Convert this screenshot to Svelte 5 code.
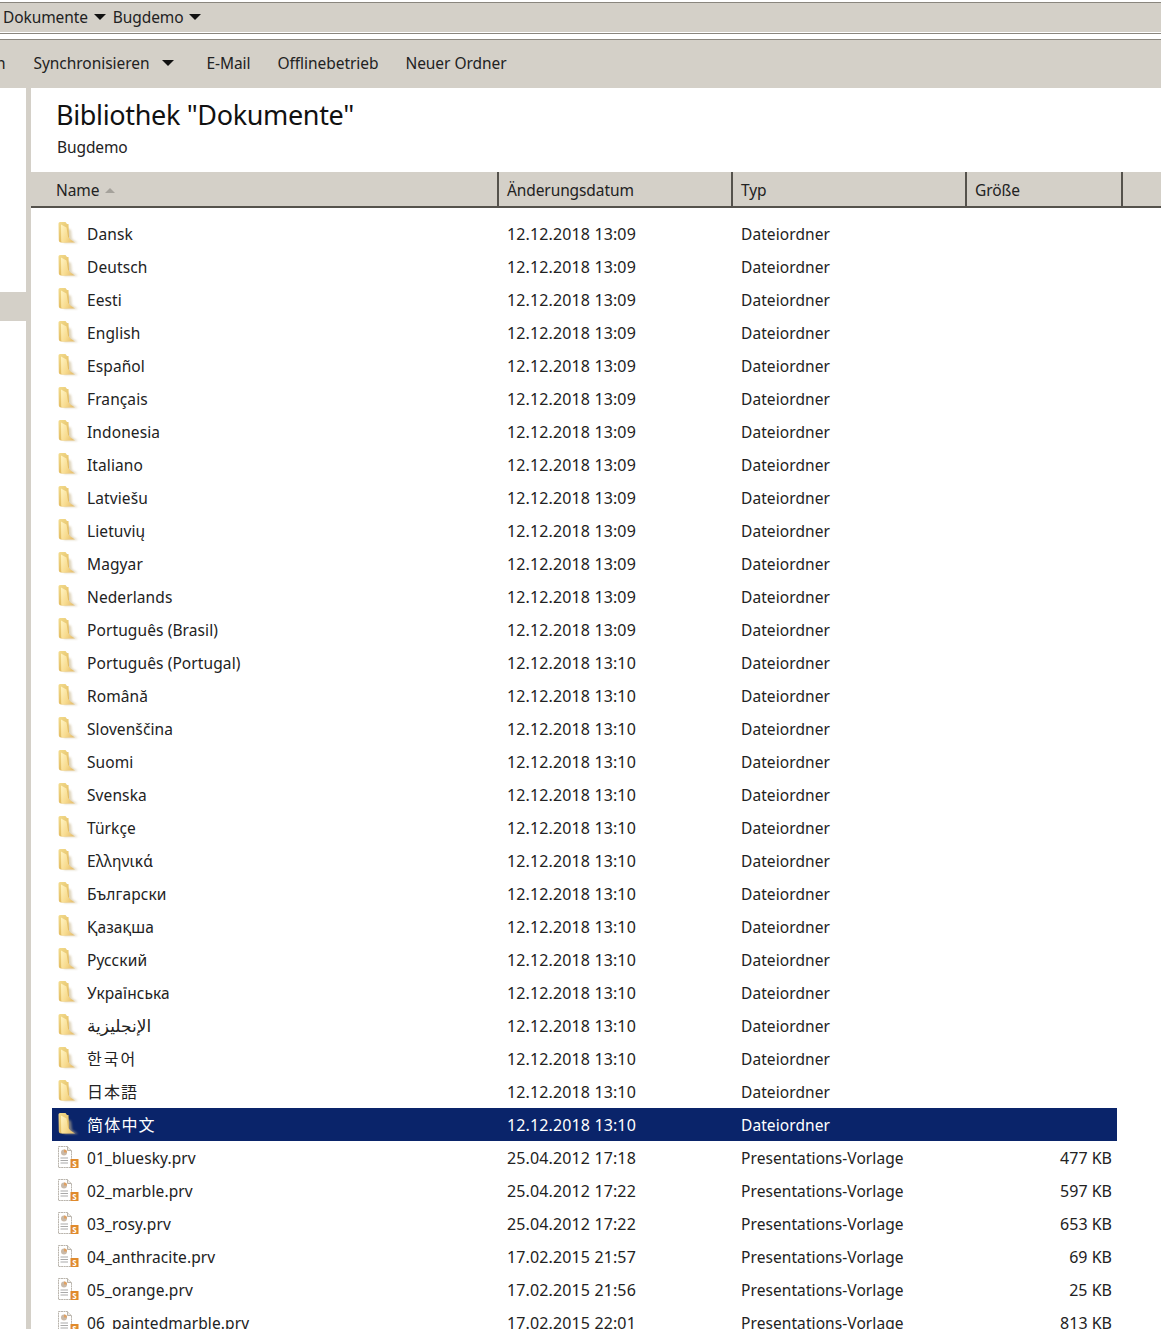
<script>
  const folders = [
    ["Dansk", "13:09"], ["Deutsch", "13:09"], ["Eesti", "13:09"], ["English", "13:09"],
    ["Español", "13:09"], ["Français", "13:09"], ["Indonesia", "13:09"], ["Italiano", "13:09"],
    ["Latviešu", "13:09"], ["Lietuvių", "13:09"], ["Magyar", "13:09"], ["Nederlands", "13:09"],
    ["Português (Brasil)", "13:09"], ["Português (Portugal)", "13:10"], ["Română", "13:10"],
    ["Slovenščina", "13:10"], ["Suomi", "13:10"], ["Svenska", "13:10"], ["Türkçe", "13:10"],
    ["Ελληνικά", "13:10"], ["Български", "13:10"], ["Қазақша", "13:10"], ["Русский", "13:10"],
    ["Українська", "13:10"], ["الإنجليزية", "13:10", "ar"], ["한국어", "13:10", "ko"], ["日本語", "13:10", "ja"],
    ["简体中文", "13:10", "zh"]
  ];

  const files = [
    ["01_bluesky.prv", "25.04.2012 17:18", "477 KB"],
    ["02_marble.prv", "25.04.2012 17:22", "597 KB"],
    ["03_rosy.prv", "25.04.2012 17:22", "653 KB"],
    ["04_anthracite.prv", "17.02.2015 21:57", "69 KB"],
    ["05_orange.prv", "17.02.2015 21:56", "25 KB"],
    ["06_paintedmarble.prv", "17.02.2015 22:01", "813 KB"]
  ];
</script>

{#snippet folderIcon()}
  <svg class="icon" width="24" height="24" viewBox="0 0 24 24">
    <defs>
      <linearGradient id="fb" x1="0" y1="0" x2="0.6" y2="1">
        <stop offset="0" stop-color="#f3dc8e" />
        <stop offset="1" stop-color="#dfb558" />
      </linearGradient>
      <linearGradient id="ff" x1="0" y1="0" x2="1" y2="0.6">
        <stop offset="0" stop-color="#fff4c4" />
        <stop offset="0.6" stop-color="#f8dc90" />
        <stop offset="1" stop-color="#e8c272" />
      </linearGradient>
      <filter id="soft" x="-30%" y="-30%" width="160%" height="160%">
        <feGaussianBlur stdDeviation="1.1" />
      </filter>
    </defs>
    <path d="M9 6 L15 9 L16 18 L22 22 L8 22 Z" fill="#c9b890" opacity="0.6" filter="url(#soft)" />
    <path d="M2.5 2.5 Q2.5 1 4 1 L9.5 1 L11 3 L12.5 3 L13 17 L15 21 L5 21.5 Q3 21.5 2.8 19.5 Z" fill="url(#fb)" />
    <path d="M5 3.5 L10.5 6.5 L12 15.5 Q13 18 19 21.5 L6.5 21.5 Q5.3 21.5 5.2 20 Z" fill="url(#ff)" />
  </svg>
{/snippet}

{#snippet fileIcon()}
  <svg class="icon" width="24" height="24" viewBox="0 0 24 24">
    <path d="M2.5 1.5 H11.5 L15.5 5.5 V22.5 H2.5 Z" fill="#fff" stroke="#b9b4ac" stroke-dasharray="2 0.5" />
    <path d="M11.5 1.5 V5.5 H15.5" fill="#eeeae2" stroke="#b9b4ac" />
    <circle cx="8" cy="7.5" r="3" fill="#c9b9a8" />
    <path d="M8 7.5 V4.5 A3 3 0 0 1 11 7.5 Z" fill="#e0a060" />
    <path d="M4.5 13 H12 M4.5 15.5 H12 M4.5 18 H12" stroke="#a9a9a9" />
    <rect x="14.5" y="14" width="8" height="9" fill="#e08a2c" />
    <text x="18.5" y="21.5" class="badge">S</text>
  </svg>
{/snippet}

<div class="window">
  <div class="crumbs">
    <span>Dokumente</span><i class="caret"></i>
    <span>Bugdemo</span><i class="caret"></i>
  </div>
  <div class="rule"></div>
  <div class="toolbar">
    <span class="cut">n</span>
    <span class="sync">Synchronisieren</span><i class="caret wide"></i>
    <span class="mail">E-Mail</span>
    <span>Offlinebetrieb</span>
    <span>Neuer Ordner</span>
  </div>

  <div class="body">
    <div class="side">
      <div class="side-sel"></div>
    </div>
    <div class="split"></div>
    <main>
      <div class="lib">
        <h1>Bibliothek "Dokumente"</h1>
        <p>Bugdemo</p>
      </div>
      <div class="head">
        <div class="h-name">Name <i class="sort"></i></div>
        <div class="h-date">Änderungsdatum</div>
        <div class="h-type">Typ</div>
        <div class="h-size">Größe</div>
        <div class="h-rest"></div>
      </div>
      <div class="list">
        {#each folders as f, i}
          <div class="row" class:sel={i === folders.length - 1}>
            <div class="name">{@render folderIcon()}<span class={f[2]}>{f[0]}</span></div>
            <div class="date">12.12.2018 {f[1]}</div>
            <div class="type">Dateiordner</div>
            <div class="size"></div>
          </div>
        {/each}
        {#each files as f}
          <div class="row">
            <div class="name">{@render fileIcon()}<span>{f[0]}</span></div>
            <div class="date">{f[1]}</div>
            <div class="type">Presentations-Vorlage</div>
            <div class="size">{f[2]}</div>
          </div>
        {/each}
      </div>
    </main>
  </div>
</div>

<style>
  :global(body) {
    background: #fff;
  }

  .window {
    width: 1161px;
    height: 1329px;
    overflow: hidden;
    font-family: "Noto Sans", "Noto Sans CJK SC", "DejaVu Sans", sans-serif;
    font-size: 15.5px;
    color: #222;
  }

  .crumbs {
    height: 29px;
    margin-top: 2px;
    border-top: 1px solid #8a867e;
    background: #d4d0c8;
    display: flex;
    align-items: center;
    padding-left: 3px;
    letter-spacing: -0.1px;
  }

  .crumbs span {
    position: relative;
    top: -1px;
  }

  .caret {
    display: inline-block;
    width: 0;
    height: 0;
    margin: 0 7px 1px 6px;
    border-left: 6px solid transparent;
    border-right: 6px solid transparent;
    border-top: 6px solid #111;
  }

  .rule {
    height: 5px;
    border-top: 1px solid #fff;
    border-bottom: 1px solid #fff;
    background: linear-gradient(#8a867e 1px, #fff 1px);
  }

  .toolbar {
    height: 49px;
    box-sizing: border-box;
    padding-bottom: 2px;
    border-top: 1px solid #8a867e;
    background: #d4d0c8;
    display: flex;
    align-items: center;
    gap: 27px;
    overflow: hidden;
    letter-spacing: -0.05px;
  }

  .cut {
    margin-left: -4px;
    margin-right: 1px;
  }

  .sync {
    margin-right: -14px;
  }

  .caret.wide {
    margin: 0;
  }

  .mail {
    margin-left: 5px;
  }

  .body {
    display: flex;
    height: 1241px;
  }

  .side {
    width: 26px;
    background: #fff;
    padding-top: 204px;
  }

  .side-sel {
    height: 29px;
    background: #d4d0c8;
  }

  .split {
    width: 5px;
    background: #d4d0c8;
  }

  main {
    flex: 1;
    min-width: 0;
  }

  .lib {
    height: 84px;
    padding-left: 25px;
    box-sizing: border-box;
  }

  h1 {
    margin: 0;
    padding-top: 8px;
    font-size: 27px;
    line-height: 38px;
    font-weight: 400;
    letter-spacing: -0.35px;
    color: #111;
  }

  .lib p {
    margin: 3px 0 0 1px;
    line-height: 20px;
    letter-spacing: -0.1px;
  }

  .head {
    display: flex;
    box-sizing: border-box;
    height: 36px;
    background: #d4d0c8;
    border-bottom: 2px solid #55524c;
    line-height: 36px;
    letter-spacing: -0.1px;
  }

  .head > div {
    box-sizing: border-box;
    border-right: 2px solid #55524c;
    padding-left: 8px;
  }

  .h-name {
    width: 468px;
    padding-left: 25px !important;
  }

  .h-date,
  .h-type {
    width: 234px;
  }

  .h-size {
    width: 156px;
  }

  .h-rest {
    flex: 1;
    border-right: 0 !important;
  }

  .sort {
    display: inline-block;
    width: 0;
    height: 0;
    margin-left: 2px;
    vertical-align: 3px;
    border-left: 5px solid transparent;
    border-right: 5px solid transparent;
    border-bottom: 5px solid #a5a29b;
  }

  .list {
    padding: 9px 44px 0 21px;
  }

  .row {
    display: flex;
    height: 33px;
    line-height: 35px;
    white-space: nowrap;
  }

  .row.sel {
    background: #0a246a;
    color: #fff;
  }

  .name {
    width: 455px;
    display: flex;
    padding-left: 4px;
    box-sizing: border-box;
    letter-spacing: 0.1px;
  }

  .icon {
    flex: none;
    margin: 4px 7px 0 0;
  }

  .ar {
    font-family: "DejaVu Sans", sans-serif;
    font-size: 17px;
    letter-spacing: 0;
  }

  .ko {
    font-family: "Noto Sans CJK KR", sans-serif;
    font-size: 16px;
    line-height: 33px;
    letter-spacing: 2px;
  }

  .ja {
    font-family: "Noto Sans CJK JP", sans-serif;
    font-size: 16px;
    line-height: 33px;
    letter-spacing: 1px;
  }

  .zh {
    font-family: "Noto Sans CJK SC", sans-serif;
    font-size: 16px;
    line-height: 33px;
    letter-spacing: 1.2px;
  }

  .badge {
    font-size: 8px;
    font-weight: 700;
    fill: #fff;
    text-anchor: middle;
  }

  .date {
    width: 234px;
    font-size: 16px;
    letter-spacing: 0.13px;
  }

  .type {
    width: 234px;
    letter-spacing: 0.08px;
  }

  .size {
    flex: 1;
    text-align: right;
    padding-right: 5px;
    font-size: 16px;
  }
</style>
